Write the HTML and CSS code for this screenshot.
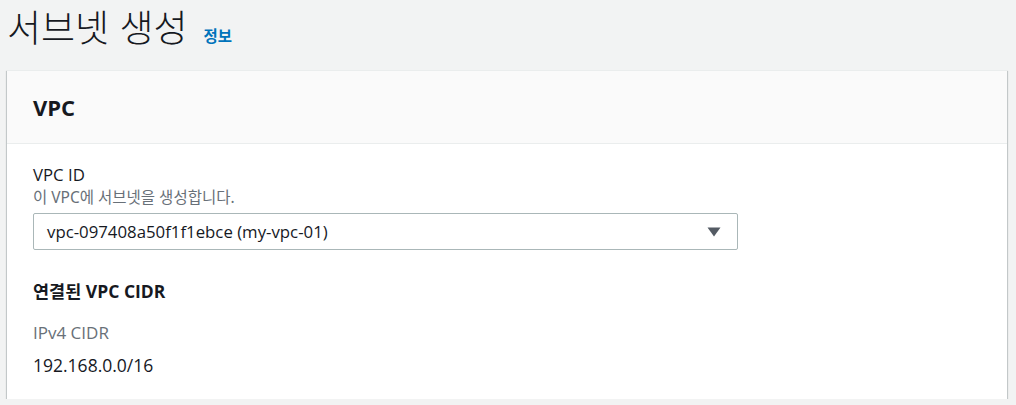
FILE: index.html
```html
<!DOCTYPE html>
<html lang="ko">
<head>
<meta charset="utf-8">
<title>서브넷 생성</title>
<link rel="stylesheet" href="styles.css">
</head>
<body>
<div class="page">
  <div class="title-row">
    <h1 class="title">서브넷 생성</h1>
    <a class="info-link" href="#">정보</a>
  </div>
  <section class="card">
    <div class="card-header">
      <h2 class="card-title">VPC</h2>
    </div>
    <div class="card-body">
      <div class="field">
        <div class="field-label">VPC ID</div>
        <div class="field-desc">이 VPC에 서브넷을 생성합니다.</div>
        <div class="select">
          <span class="select-value">vpc-097408a50f1f1ebce (my-vpc-01)</span>
          <svg class="caret" width="14" height="10" viewBox="0 0 14 10"><path d="M0.5 0.5 H13.5 L7 9.5 Z" fill="#545b64"/></svg>
        </div>
      </div>
      <h3 class="sub-title">연결된 VPC CIDR</h3>
      <div class="kv-key">IPv4 CIDR</div>
      <div class="kv-value">192.168.0.0/16</div>
    </div>
  </section>
</div>
</body>
</html>
```

FILE: styles.css
```css
html, body {
  margin: 0;
  padding: 0;
  background: #f2f3f3;
}
body {
  font-family: "Open Sans", "Noto Sans CJK KR", sans-serif;
  color: #16191f;
}
.page {
  padding: 0 9px 0 7px;
}
.title-row {
  display: flex;
  align-items: baseline;
  gap: 16px;
  height: 70px;
  padding-left: 0;
}
.title {
  margin: 0;
  font-family: "Noto Sans CJK KR", sans-serif;
  font-weight: 300;
  font-size: 37px;
  line-height: 52px;
  color: #16191f;
}
.info-link {
  font-family: "Noto Sans CJK KR", sans-serif;
  font-size: 15.5px;
  font-weight: 700;
  color: #0073bb;
  text-decoration: none;
}
.card {
  background: #fff;
  box-shadow: 0 1px 1px 0 rgba(0, 28, 36, 0.3), 1px 1px 1px 0 rgba(0, 28, 36, 0.15), -1px 1px 1px 0 rgba(0, 28, 36, 0.15);
  border-top: 1px solid #eaeded;
}
.card-header {
  background: #fafafa;
  border-bottom: 1px solid #eaeded;
  height: 72px;
  display: flex;
  align-items: center;
  padding: 0 26px;
}
.card-title {
  margin: 0;
  font-size: 22px;
  font-weight: 700;
}
.card-body {
  padding: 20px 26px 22px;
}
.field-label {
  font-size: 16.8px;
  line-height: 22px;
}
.field-desc {
  font-family: "Noto Sans", "Noto Sans CJK KR", sans-serif;
  font-size: 15.5px;
  line-height: 22px;
  color: #687078;
}
.select {
  margin-top: 5px;
  width: 705px;
  height: 37px;
  box-sizing: border-box;
  border: 1px solid #aab7b8;
  border-radius: 2px;
  display: flex;
  align-items: center;
  justify-content: space-between;
  padding: 0 16px 0 13px;
}
.select-value {
  font-size: 16.8px;
}
.caret {
  display: block;
}
.sub-title {
  margin: 28px 0 0;
  font-size: 17.5px;
  font-weight: 700;
  line-height: 26px;
}
.kv-key {
  margin-top: 17px;
  font-size: 17px;
  color: #687078;
  line-height: 24px;
}
.kv-value {
  margin-top: 8px;
  font-size: 17.5px;
  line-height: 24px;
}
```
